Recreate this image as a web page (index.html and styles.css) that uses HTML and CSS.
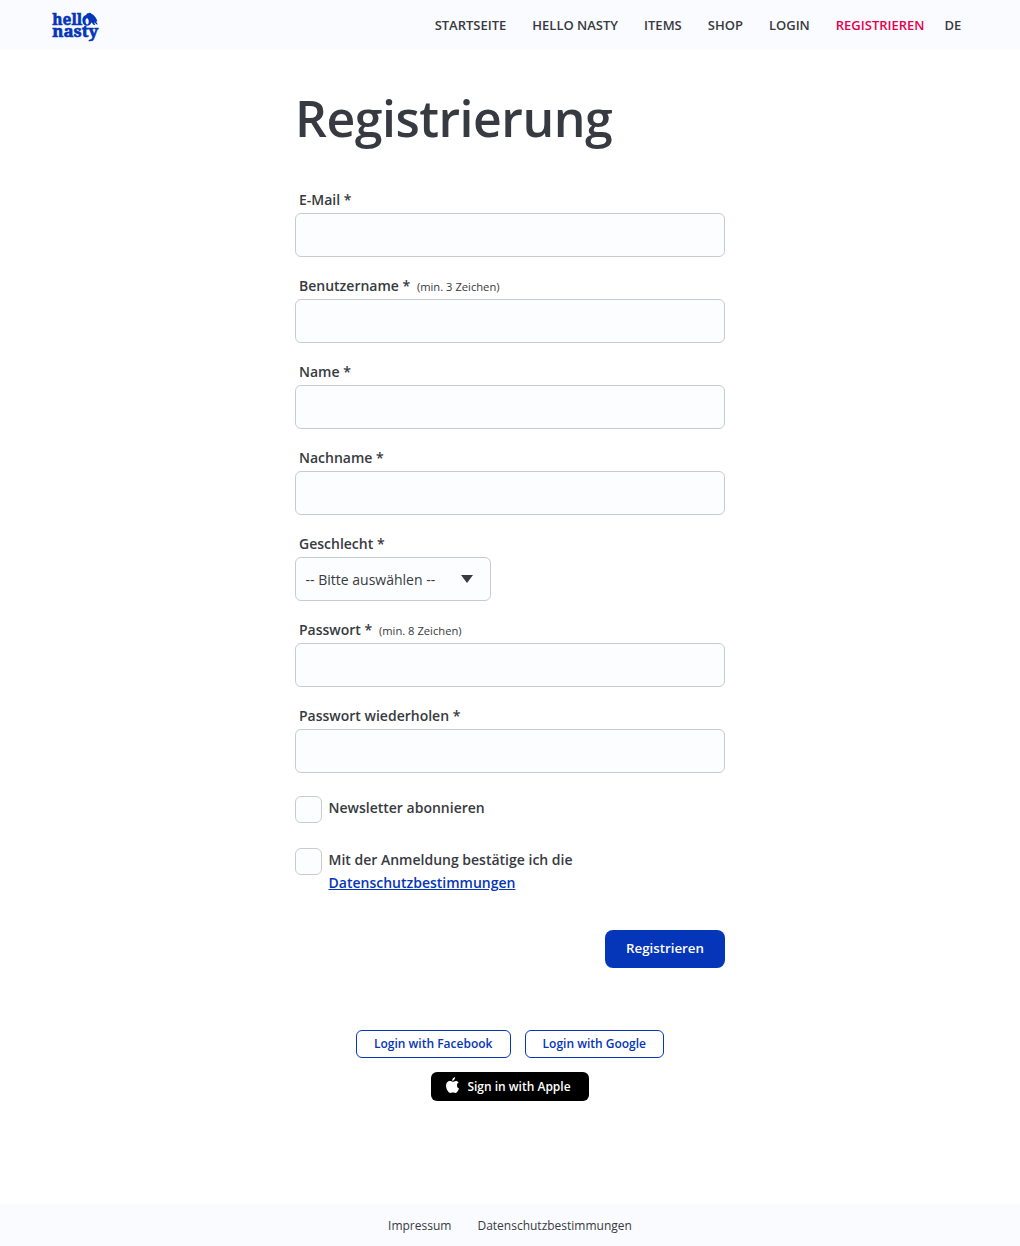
FILE: index.html
```html
<!DOCTYPE html>
<html lang="de">
<head>
<meta charset="utf-8">
<title>Registrierung – hello nasty</title>
<link rel="stylesheet" href="styles.css">
</head>
<body>
<header class="topbar">
  <a class="logo" aria-label="hello nasty">
    <svg width="52" height="36" viewBox="0 0 52 36">
      <g class="logo-text">
        <text x="1.300" y="17.300" textLength="30" lengthAdjust="spacingAndGlyphs">hell</text>
        <text x="1.300" y="29" textLength="46" lengthAdjust="spacingAndGlyphs">nasty</text>
      </g>
      <path fill="#0535b8" fill-rule="evenodd" d="M31.500 13.500C31 9.500 33 7.500 35 7L36 5.500L39 4.800L42.500 7L45 10L46.500 13.500L45 13.300L46.800 16.500L45.300 16.300L43 14L44.300 17.300L42.500 16.700L40.300 14.200C40 16.500 38 17.800 36 17.700C33.500 17.700 31.800 16 31.500 13.500ZM34.600 12C34.200 14.500 35 16.600 36.300 16.400C37.900 16.200 38.100 13 37.200 11.200C36.500 9.700 35 10 34.600 12Z"/>
    </svg>
  </a>
  <nav class="menu">
    <a>STARTSEITE</a><a>HELLO NASTY</a><a>ITEMS</a><a>SHOP</a><a>LOGIN</a><a class="active">REGISTRIEREN</a><a class="lang">DE</a>
  </nav>
</header>
<main class="content">
  <h1><span>Registrierung</span></h1>
  <form>
    <div class="field"><label for="mail"><span>E-Mail *</span></label><input id="mail" type="email"></div>
    <div class="field"><label for="user"><span>Benutzername *</span><small>(min. 3 Zeichen)</small></label><input id="user" type="text"></div>
    <div class="field"><label for="first"><span>Name *</span></label><input id="first" type="text"></div>
    <div class="field"><label for="last"><span>Nachname *</span></label><input id="last" type="text"></div>
    <div class="field"><label><span>Geschlecht *</span></label>
      <div class="select"><span>-- Bitte auswählen --</span><svg width="12" height="8" viewBox="0 0 12 8"><path d="M0 0h12L6 8z" fill="#373a40"/></svg></div>
    </div>
    <div class="field"><label for="pw"><span>Passwort *</span><small>(min. 8 Zeichen)</small></label><input id="pw" type="password"></div>
    <div class="field"><label for="pw2"><span>Passwort wiederholen *</span></label><input id="pw2" type="password"></div>
    <div class="check"><input type="checkbox" id="news"><label for="news"><span>Newsletter abonnieren</span></label></div>
    <div class="check"><input type="checkbox" id="terms"><label for="terms"><span>Mit der Anmeldung bestätige ich die</span><br><a>Datenschutzbestimmungen</a></label></div>
    <button class="submit" type="button"><span>Registrieren</span></button>
  </form>
  <div class="social">
    <button class="outline fb" type="button"><span>Login with Facebook</span></button>
    <button class="outline google" type="button"><span>Login with Google</span></button>
    <button class="apple" type="button">
      <svg width="13" height="16" viewBox="0 0 13 16"><path fill="#fff" d="M9.100 0C9.200 1 8.800 2 8.200 2.700C7.600 3.400 7.200 3.700 6.200 3.700C6.100 2.700 6.500 1.900 7 1.300C7.600.6 8.400.1 9.100 0ZM12.700 5.500C11.500 6.200 10.900 7.200 11 8.500C11 10 11.800 11 13 11.500C12.700 12.700 12 13.900 11.300 14.800C10.700 15.600 10.100 16 9.300 16C8.400 16 7.900 15.600 6.800 15.600C5.700 15.600 5.200 16 4.300 16C3.400 16 2.700 15.200 2 14.300C.8 12.700 0 10.700 0 8.600C0 5.800 1.800 4 3.900 4C5 4 5.900 4.700 6.700 4.700C7.500 4.700 8.500 3.900 9.800 3.900C10.900 3.900 12 4.500 12.700 5.500Z"/></svg>
      <span>Sign in with Apple</span>
    </button>
  </div>
</main>
<footer class="footer"><a>Impressum</a><a>Datenschutzbestimmungen</a></footer>
</body>
</html>
```
FILE: styles.css
```css
* { box-sizing: border-box; }
body {
  margin: 0;
  min-height: 1246px;
  display: flex;
  flex-direction: column;
  font-family: "Open Sans", sans-serif;
  font-size: 14px;
  color: #373a40;
  background: #fff;
}
.topbar {
  height: 50px;
  padding: 0 58.7px 0 51px;
  display: flex;
  align-items: center;
  justify-content: space-between;
  background: #fafbfe;
}
.logo { display: flex; padding-top: 2px; }
.logo svg { overflow: visible; }
.logo-text {
  font-family: "Noto Serif", "DejaVu Serif", "Liberation Serif", serif;
  font-weight: 700;
  font-size: 15.5px;
  fill: #0535b8;
  stroke: #0535b8;
  stroke-width: .6px;
}
.menu {
  display: flex;
  gap: 26px;
  font-size: 13px;
  font-weight: 600;
  line-height: 20px;
}
.menu .active { color: #e5004f; }
.menu .lang { margin-left: -6px; }
.content { width: 430px; margin: 0 auto; flex: 1; }
h1 {
  margin: 34px 0 39px;
  font-size: 50px;
  line-height: 68px;
  font-weight: 600;
  letter-spacing: -.5px;
}
.field { height: 86px; }
.field label {
  display: flex;
  align-items: baseline;
  gap: 7px;
  height: 22px;
  padding-left: 4px;
  line-height: 18px;
  font-weight: 600;
}
.field small { font-size: 11.2px; font-weight: 400; margin-left: -.3px; }
.field input {
  display: block;
  width: 100%;
  height: 44px;
  border: 1px solid #c9cbcf;
  border-radius: 6px;
  background: #fcfdff;
}
.select {
  width: 195.6px;
  height: 44px;
  padding: 0 16.6px 0 9.6px;
  display: flex;
  align-items: center;
  justify-content: space-between;
  border: 1px solid #c9cbcf;
  border-radius: 6px;
  background: #fcfdff;
}
.check {
  display: flex;
  gap: 7px;
  height: 52px;
  padding-top: 3px;
  font-weight: 600;
  line-height: 23px;
}
.check input {
  appearance: none;
  flex: none;
  width: 26.5px;
  height: 26.5px;
  margin: .4px 0 0;
  border: 1px solid #c9cbcf;
  border-radius: 6px;
  background: #fcfdff;
}
.check a { color: #0535b8; text-decoration: underline; }
button {
  font-family: inherit;
  font-weight: 600;
  padding: 0;
  border-radius: 6px;
}
.submit {
  display: block;
  width: 120px;
  height: 38px;
  margin: 32.5px 0 0 auto;
  padding-bottom: 1px;
  border: 0;
  border-radius: 8px;
  background: #0535b8;
  color: #fff;
  font-size: 13.3px;
}
.social {
  margin-top: 62px;
  display: flex;
  flex-wrap: wrap;
  justify-content: center;
  gap: 14px;
}
.social button { height: 28.5px; font-size: 12px; padding-bottom: 1px; }
.outline { border: 1px solid #0535b8; background: #fff; color: #0535b8; }
.social .fb { width: 154.6px; }
.social .google { width: 139.6px; }
.social .apple {
  width: 158px;
  padding-right: 3px;
  border: 0;
  background: #000;
  color: #fff;
  display: flex;
  align-items: center;
  justify-content: center;
  gap: 8px;
  padding-bottom: 0;
}
.apple svg { margin-top: -3px; }
.footer {
  height: 42px;
  display: flex;
  align-items: center;
  justify-content: center;
  gap: 26px;
  background: #fafbfe;
  font-size: 12px;
}
```
